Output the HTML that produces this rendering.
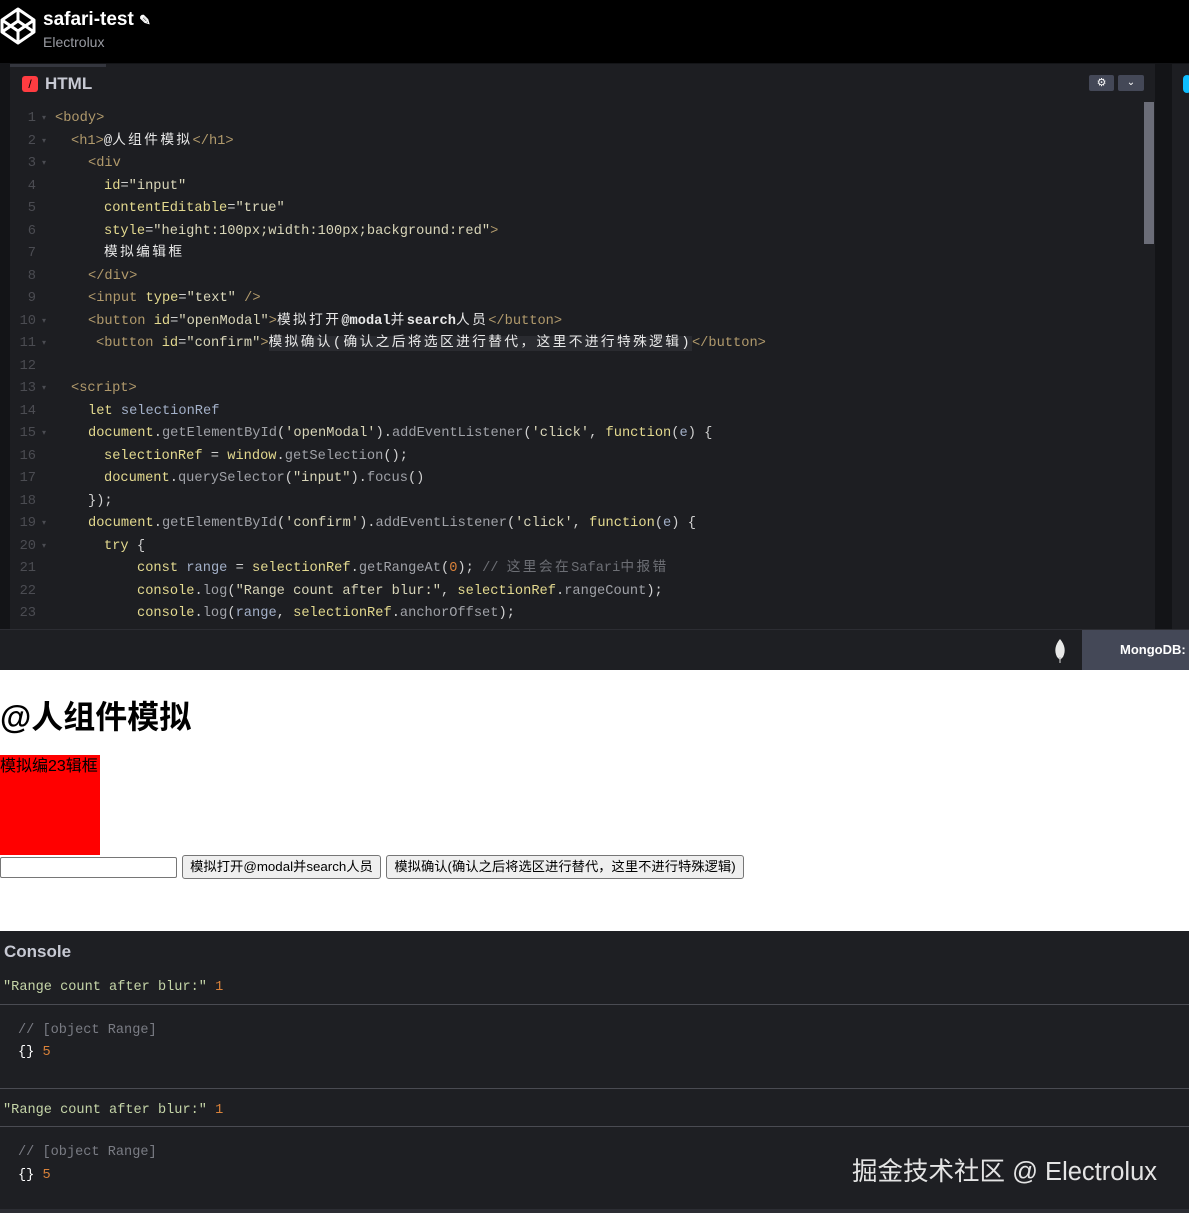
<!DOCTYPE html>
<html><head><meta charset="utf-8"><style>
*{margin:0;padding:0;box-sizing:border-box}
body{width:1189px;height:1213px;overflow:hidden;background:#000;font-family:"Liberation Sans","Noto Sans CJK SC",sans-serif;position:relative}
.abs{position:absolute}
.code{position:absolute;left:0;top:108px;width:1140px;font-family:"Liberation Mono","Noto Sans CJK SC",monospace;font-size:13.7px;line-height:22.5px;color:#d0d0d0}
.ln{position:absolute;height:22.5px;white-space:pre}
.num{position:absolute;left:14px;width:22px;text-align:right;color:#4b4c52}
.ar{position:absolute;left:42px;color:#4b4c52;font-size:8px}
.t{color:#b19a6c}.a{color:#e3d98f}.s{color:#d9d6b9}.k{color:#e3d98f}.m{color:#a0a2a8}.c{color:#6d6f75}.n{color:#d9823a}.w{color:#e8e8e8}.v{color:#a3b0c8}
.cj{letter-spacing:2.4px}
.con{font-family:"Liberation Mono",monospace;font-size:13.6px}
</style></head><body>
<svg class="abs" style="left:0;top:6px" width="36" height="40" viewBox="0 0 36 40"><g fill="none" stroke="#fff" stroke-width="3" stroke-linejoin="round"><path d="M18 3 L34 14 L34 26 L18 37 L2 26 L2 14 Z"/><path d="M2 14 L18 25 L34 14 M2 26 L18 15 L34 26 M18 3 L18 15 M18 25 L18 37"/></g></svg>
<div class="abs" style="left:43px;top:9px;color:#fff;font-size:19px;font-weight:bold">safari-test <span style="font-size:14px">✎</span></div>
<div class="abs" style="left:43px;top:34px;color:#9a9ca3;font-size:14px">Electrolux</div>
<div class="abs" style="left:0;top:63px;width:1189px;height:566px;background:#131417"></div>
<div class="abs" style="left:10px;top:64px;width:1145px;height:565px;background:#1d1e22"></div>
<div class="abs" style="left:10px;top:64px;width:96px;height:3px;background:#34363e"></div>
<div class="abs" style="left:1172px;top:64px;width:17px;height:565px;background:#1d1e22"></div>
<div class="abs" style="left:1183px;top:75px;width:8px;height:18px;border-radius:4px;background:#0ebeff"></div>
<div class="abs" style="left:22px;top:76px;width:16px;height:16px;border-radius:3px;background:#ff3c41;color:#000;font-size:12px;line-height:16px;text-align:center">/</div>
<div class="abs" style="left:45px;top:74px;color:#c7c9d3;font-size:17px;font-weight:bold">HTML</div>
<div class="abs" style="left:1089px;top:75px;width:25px;height:16px;background:#444857;border-radius:2px;color:#fff;font-size:11px;text-align:center;line-height:16px">⚙</div>
<div class="abs" style="left:1118px;top:75px;width:26px;height:16px;background:#444857;border-radius:2px;color:#fff;font-size:10px;text-align:center;line-height:16px">⌄</div>
<div class="abs" style="left:1144px;top:102px;width:10px;height:142px;background:#6b6d78"></div>
<div class="code">
<div class="ln" style="top:0"><span class="num">1</span><span class="ar">▾</span><span style="position:absolute;left:55px"><span class="t">&lt;body&gt;</span></span></div>
<div class="ln" style="top:22.5px"><span class="num">2</span><span class="ar">▾</span><span style="position:absolute;left:71px"><span class="t">&lt;h1&gt;</span><span class="w">@<span class="cj">人组件模拟</span></span><span class="t">&lt;/h1&gt;</span></span></div>
<div class="ln" style="top:45px"><span class="num">3</span><span class="ar">▾</span><span style="position:absolute;left:88px"><span class="t">&lt;div</span></span></div>
<div class="ln" style="top:67.5px"><span class="num">4</span><span style="position:absolute;left:104px"><span class="a">id</span>=<span class="s">"input"</span></span></div>
<div class="ln" style="top:90px"><span class="num">5</span><span style="position:absolute;left:104px"><span class="a">contentEditable</span>=<span class="s">"true"</span></span></div>
<div class="ln" style="top:112.5px"><span class="num">6</span><span style="position:absolute;left:104px"><span class="a">style</span>=<span class="s">"height:100px;width:100px;background:red"</span><span class="t">&gt;</span></span></div>
<div class="ln" style="top:135px"><span class="num">7</span><span style="position:absolute;left:104px"><span class="w cj">模拟编辑框</span></span></div>
<div class="ln" style="top:157.5px"><span class="num">8</span><span style="position:absolute;left:88px"><span class="t">&lt;/div&gt;</span></span></div>
<div class="ln" style="top:180px"><span class="num">9</span><span style="position:absolute;left:88px"><span class="t">&lt;input</span> <span class="a">type</span>=<span class="s">"text"</span> <span class="t">/&gt;</span></span></div>
<div class="ln" style="top:202.5px"><span class="num">10</span><span class="ar">▾</span><span style="position:absolute;left:88px"><span class="t">&lt;button</span> <span class="a">id</span>=<span class="s">"openModal"</span><span class="t">&gt;</span><span class="w"><span class="cj">模拟打开</span><b>@modal</b><span class="cj">并</span><b>search</b><span class="cj">人员</span></span><span class="t">&lt;/button&gt;</span></span></div>
<div class="ln" style="top:225px"><span class="num">11</span><span class="ar">▾</span><span style="position:absolute;left:96px"><span class="t">&lt;button</span> <span class="a">id</span>=<span class="s">"confirm"</span><span class="t">&gt;</span><span class="w cj" style="background:#2a2b30">模拟确认(确认之后将选区进行替代，这里不进行特殊逻辑)</span><span class="t">&lt;/button&gt;</span></span></div>
<div class="ln" style="top:247.5px"><span class="num">12</span></div>
<div class="ln" style="top:270px"><span class="num">13</span><span class="ar">▾</span><span style="position:absolute;left:71px"><span class="t">&lt;script&gt;</span></span></div>
<div class="ln" style="top:292.5px"><span class="num">14</span><span style="position:absolute;left:88px"><span class="k">let</span> <span class="v">selectionRef</span></span></div>
<div class="ln" style="top:315px"><span class="num">15</span><span class="ar">▾</span><span style="position:absolute;left:88px"><span class="k">document</span>.<span class="m">getElementById</span>(<span class="s">'openModal'</span>).<span class="m">addEventListener</span>(<span class="s">'click'</span>, <span class="k">function</span>(<span class="v">e</span>) {</span></div>
<div class="ln" style="top:337.5px"><span class="num">16</span><span style="position:absolute;left:104px"><span class="k">selectionRef</span> = <span class="k">window</span>.<span class="m">getSelection</span>();</span></div>
<div class="ln" style="top:360px"><span class="num">17</span><span style="position:absolute;left:104px"><span class="k">document</span>.<span class="m">querySelector</span>(<span class="s">"input"</span>).<span class="m">focus</span>()</span></div>
<div class="ln" style="top:382.5px"><span class="num">18</span><span style="position:absolute;left:88px">});</span></div>
<div class="ln" style="top:405px"><span class="num">19</span><span class="ar">▾</span><span style="position:absolute;left:88px"><span class="k">document</span>.<span class="m">getElementById</span>(<span class="s">'confirm'</span>).<span class="m">addEventListener</span>(<span class="s">'click'</span>, <span class="k">function</span>(<span class="v">e</span>) {</span></div>
<div class="ln" style="top:427.5px"><span class="num">20</span><span class="ar">▾</span><span style="position:absolute;left:104px"><span class="k">try</span> {</span></div>
<div class="ln" style="top:450px"><span class="num">21</span><span style="position:absolute;left:137px"><span class="k">const</span> <span class="v">range</span> = <span class="k">selectionRef</span>.<span class="m">getRangeAt</span>(<span class="n">0</span>); <span class="c">// <span class="cj">这里会在</span>Safari<span class="cj">中报错</span></span></span></div>
<div class="ln" style="top:472.5px"><span class="num">22</span><span style="position:absolute;left:137px"><span class="k">console</span>.<span class="m">log</span>(<span class="s">"Range count after blur:"</span>, <span class="k">selectionRef</span>.<span class="m">rangeCount</span>);</span></div>
<div class="ln" style="top:495px"><span class="num">23</span><span style="position:absolute;left:137px"><span class="k">console</span>.<span class="m">log</span>(<span class="v">range</span>, <span class="k">selectionRef</span>.<span class="m">anchorOffset</span>);</span></div>
</div>
<div class="abs" style="left:0;top:629px;width:1189px;height:41px;background:#1e1f23;border-top:1px solid #2c2d33"></div>
<svg class="abs" style="left:1053px;top:638px" width="14" height="26" viewBox="0 0 14 26"><path d="M7 1 C12 7 13 13 10 19 L7 22 L4 19 C1 13 2 7 7 1Z" fill="#e8e8e8"/><rect x="6.4" y="19" width="1.2" height="6" fill="#bbb"/></svg>
<div class="abs" style="left:1082px;top:630px;width:107px;height:40px;background:#444857;color:#fff;font-size:13px;font-weight:bold;line-height:40px;padding-left:38px;white-space:nowrap;overflow:hidden">MongoDB: I</div>
<div class="abs" style="left:0;top:670px;width:1189px;height:261px;background:#fff"></div>
<div class="abs" style="left:0;top:692px;font-size:32px;font-weight:bold;color:#000">@人组件模拟</div>
<div class="abs" style="left:0;top:755px;width:100px;height:100px;background:#f00;font-size:16px;color:#000;line-height:24px;white-space:nowrap">模拟编23辑框</div>
<div class="abs" style="left:0;top:857px;width:177px;height:21px;border:1px solid #767676;background:#fff;border-radius:2px"></div>
<div class="abs" style="left:182px;top:855px;width:199px;height:24px;border:1px solid #767676;background:#efefef;border-radius:3px;font-size:13.3px;line-height:22px;text-align:center;color:#000">模拟打开@modal并search人员</div>
<div class="abs" style="left:386px;top:855px;width:358px;height:24px;border:1px solid #767676;background:#efefef;border-radius:3px;font-size:13.3px;line-height:22px;text-align:center;color:#000;white-space:nowrap">模拟确认(确认之后将选区进行替代，这里不进行特殊逻辑)</div>
<div class="abs" style="left:0;top:931px;width:1189px;height:282px;background:#1e1f23"></div>
<div class="abs" style="left:4px;top:942px;color:#c7c9d3;font-size:17px;font-weight:bold">Console</div>
<div class="abs con" style="left:3px;top:980px"><span style="color:#c5d5a8">"Range count after blur:"</span> <span class="n">1</span></div>
<div class="abs" style="left:0;top:1004px;width:1189px;height:1px;background:#4a4b52"></div>
<div class="abs con" style="left:18px;top:1023px;color:#7a7c84">// [object Range]</div>
<div class="abs con" style="left:18px;top:1045px"><span style="color:#fff">{}</span> <span class="n">5</span></div>
<div class="abs" style="left:0;top:1088px;width:1189px;height:1px;background:#4a4b52"></div>
<div class="abs con" style="left:3px;top:1103px"><span style="color:#c5d5a8">"Range count after blur:"</span> <span class="n">1</span></div>
<div class="abs" style="left:0;top:1126px;width:1189px;height:1px;background:#4a4b52"></div>
<div class="abs con" style="left:18px;top:1145px;color:#7a7c84">// [object Range]</div>
<div class="abs con" style="left:18px;top:1168px"><span style="color:#fff">{}</span> <span class="n">5</span></div>
<div class="abs" style="left:0;top:1209px;width:1189px;height:4px;background:#2c2d33"></div>
<div class="abs" style="left:852px;top:1151px;color:#e4e4e4;font-size:25.5px;white-space:nowrap">掘金技术社区 @ Electrolux</div>
</body></html>
